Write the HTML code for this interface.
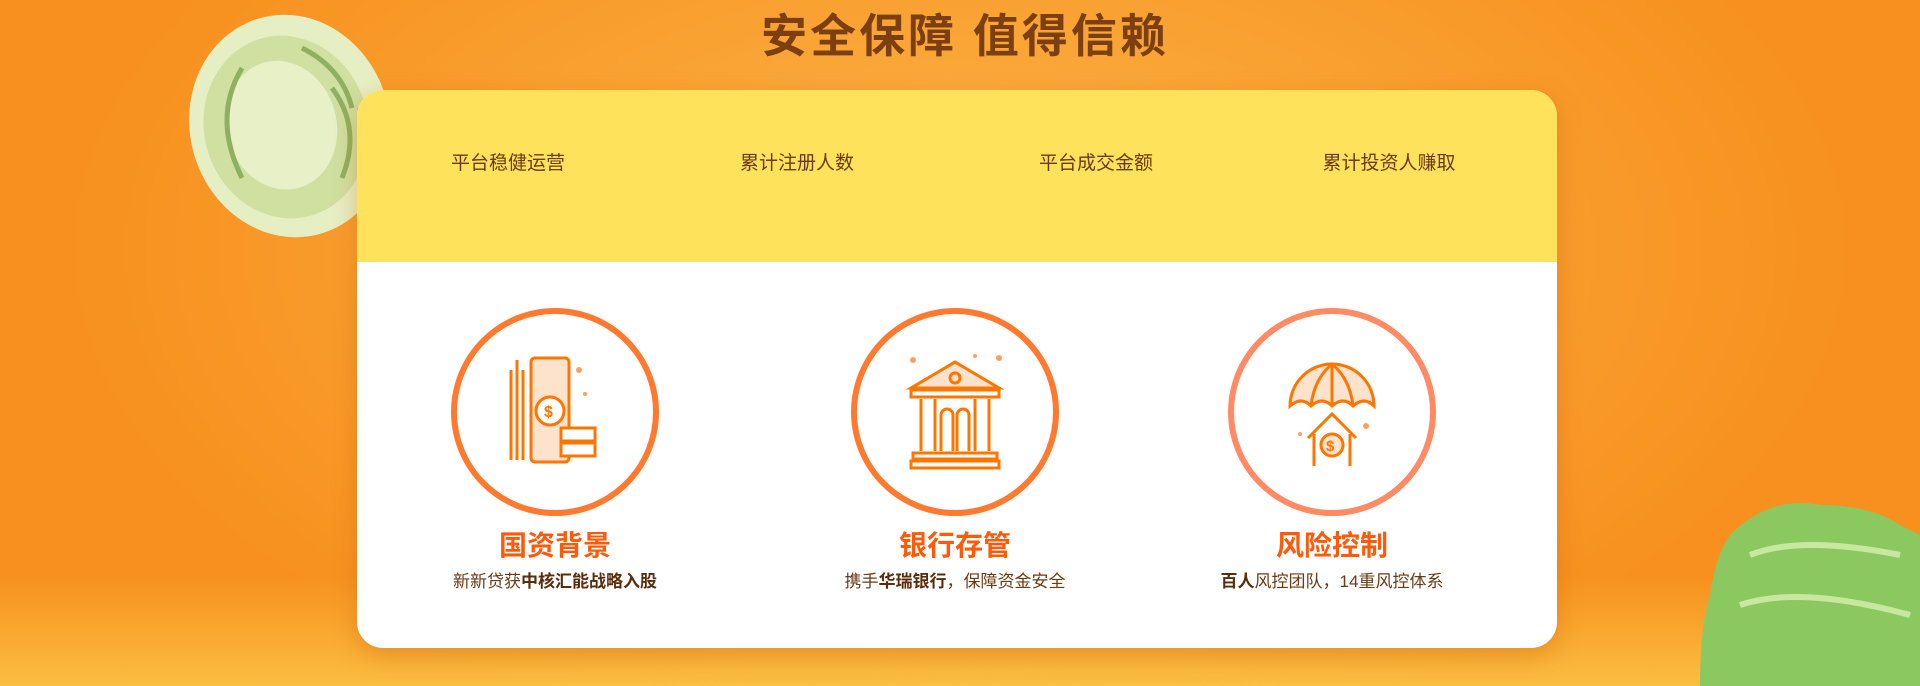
<!DOCTYPE html>
<html><head><meta charset="utf-8"><style>
*{margin:0;padding:0;box-sizing:border-box}
body{width:1920px;height:686px;overflow:hidden;position:relative;font-family:"Liberation Sans","Noto Sans CJK SC",sans-serif;
background:radial-gradient(ellipse 900px 500px at 960px 250px,#fcb445 0%,#f9a233 50%,#f7901e 100%);}
.bot{position:absolute;left:0;right:0;bottom:0;height:110px;background:linear-gradient(to bottom,rgba(252,200,70,0),rgba(252,210,80,.7))}
h1{position:absolute;top:0px;left:0;width:1930px;text-align:center;font-size:46px;font-weight:bold;color:#7c3f12;letter-spacing:3px}
.card{position:absolute;left:357px;top:90px;width:1200px;height:558px;border-radius:26px;background:#fff;overflow:hidden;box-shadow:0 8px 24px rgba(200,90,0,.35)}
.top{height:172px;background:#ffe25c;position:relative}
.lab{position:absolute;top:58px;font-size:19px;color:#6b3a12;transform:translateX(-50%);white-space:nowrap}
.circ{position:absolute;top:218px;width:208px;height:208px;border:6px solid #ff7a2e;border-radius:50%;transform:translateX(-50%)}
.t{position:absolute;top:434px;font-size:28px;font-weight:bold;color:#ff5a0a;transform:translateX(-50%);white-space:nowrap}
.s{position:absolute;top:477px;font-size:17px;color:#6b3a12;transform:translateX(-50%);white-space:nowrap}
.s b{color:#5a2c0c}
svg.i{position:absolute;top:0;left:0}
</style></head><body>
<div class="bot"></div>
<svg style="position:absolute;left:182px;top:8px" width="230" height="234" viewBox="0 0 230 234">
<ellipse cx="108" cy="118" rx="100" ry="112" fill="#e6efc3" transform="rotate(-15 108 118)"/>
<ellipse cx="104" cy="118" rx="82" ry="92" fill="#cfe0a0" transform="rotate(-15 108 118)"/>
<ellipse cx="100" cy="115" rx="55" ry="65" fill="#e8f0c8" transform="rotate(-15 108 118)"/>
<path d="M150 80 q30 40 10 90 M60 60 q-30 50 0 110 M120 40 q40 20 50 60" stroke="#8fb060" stroke-width="5" fill="none"/>
<path d="M175 100 l20 40 -10 5 z" fill="#557a30"/>
</svg>
<svg style="position:absolute;left:1700px;top:495px" width="220" height="191" viewBox="0 0 220 191">
<path d="M30 40 q40 -40 90 -30 q50 0 80 20 l20 10 v151 H0 q0 -60 10 -90 q5 -40 20 -61z" fill="#8cc860"/>
<path d="M50 60 q50 -20 150 0 M40 110 q60 -20 170 10" stroke="#c8e8a0" stroke-width="6" fill="none"/>
</svg>
<h1>安全保障 值得信赖</h1>
<div class="card">
<div class="top">
<div class="lab" style="left:151px">平台稳健运营</div>
<div class="lab" style="left:440px">累计注册人数</div>
<div class="lab" style="left:739px">平台成交金额</div>
<div class="lab" style="left:1032px">累计投资人赚取</div>
</div>
<div class="circ" style="left:198px"><svg class="i" width="196" height="196" viewBox="0 0 196 196" fill="none" stroke="#ff7500" stroke-width="3">
<path d="M60 46 v100 M66 56 v90 M54 56 v90"/><rect x="74" y="44" width="38" height="104" rx="4" fill="#fde2cc"/>
<circle cx="93" cy="97" r="14" fill="#fff"/><text x="87" y="103" font-size="16" fill="#ff7500" stroke="none" font-weight="bold">$</text>
<rect x="104" y="114" width="34" height="13" fill="#fff"/><rect x="104" y="129" width="34" height="13" fill="#fff"/>
<circle cx="122" cy="56" r="3" fill="#ffa060" stroke="none"/><circle cx="128" cy="80" r="2" fill="#ffa060" stroke="none"/></svg></div>
<div class="circ" style="left:598px"><svg class="i" width="196" height="196" viewBox="0 0 196 196" fill="none" stroke="#ff7500" stroke-width="3">
<path d="M54 74 L98 48 L142 74 Z" fill="#fde2cc"/><circle cx="98" cy="64" r="5"/>
<rect x="54" y="76" width="88" height="7"/><path d="M64 85 v52 M78 85 v52 M118 85 v52 M132 85 v52"/>
<path d="M84 137 v-36 a6 6 0 0 1 12 0 v36 M100 137 v-36 a6 6 0 0 1 12 0 v36" />
<rect x="56" y="139" width="84" height="6"/><rect x="54" y="147" width="88" height="7"/>
<circle cx="56" cy="46" r="3" fill="#ffa060" stroke="none"/><circle cx="142" cy="44" r="3" fill="#ffa060" stroke="none"/><circle cx="118" cy="42" r="2" fill="#ffa060" stroke="none"/></svg></div>
<div class="circ" style="left:975px;border-color:#ff8a64"><svg class="i" width="196" height="196" viewBox="0 0 196 196" fill="none" stroke="#ff7500" stroke-width="3">
<path d="M56 92 a42 42 0 0 1 84 0 q-10 -10 -21 0 q-10 -10 -21 0 q-10 -10 -21 0 q-10 -10 -21 0z" fill="#fde2cc"/>
<path d="M98 50 v42 M98 50 q-18 15 -21 42 M98 50 q18 15 21 42"/>
<path d="M74 124 L98 100 L122 124 M80 120 v32 M116 120 v32"/><circle cx="98" cy="131" r="11" fill="#fde2cc"/>
<text x="92" y="137" font-size="15" fill="#ff7500" stroke="none" font-weight="bold">$</text>
<circle cx="66" cy="120" r="2" fill="#ffa060" stroke="none"/><circle cx="132" cy="112" r="3" fill="#ffa060" stroke="none"/></svg></div>
<div class="t" style="left:198px">国资背景</div>
<div class="t" style="left:598px">银行存管</div>
<div class="t" style="left:975px">风险控制</div>
<div class="s" style="left:198px">新新贷获<b>中核汇能战略入股</b></div>
<div class="s" style="left:598px">携手<b>华瑞银行</b>，保障资金安全</div>
<div class="s" style="left:975px"><b>百人</b>风控团队，14重风控体系</div>
</div>
</body></html>
